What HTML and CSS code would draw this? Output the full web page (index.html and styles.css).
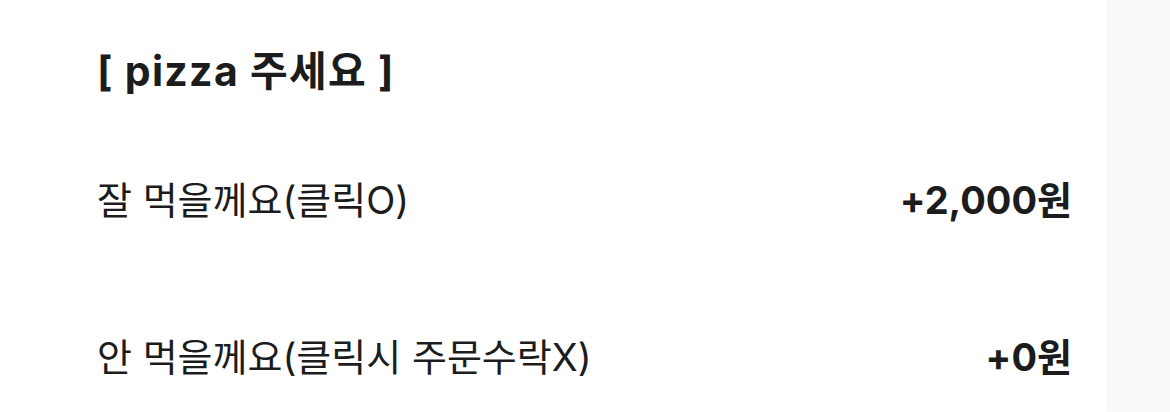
FILE: index.html
```html
<!DOCTYPE html>
<html lang="ko">
  <head>
    <meta charset="UTF-8" />
    <meta name="viewport" content="width=device-width, initial-scale=1.0" />
    <title>pizza 주세요</title>
    <link rel="stylesheet" href="styles.css">
  </head>

  <body>
    <div class="sheet">
      <h2 class="title">[ pizza 주세요 ]</h2>

      <div class="option">
        <span class="label">잘 먹을께요(클릭O)</span>
        <span class="price">+2,000원</span>
      </div>

      <div class="option">
        <span class="label">안 먹을께요(클릭시 주문수락X)</span>
        <span class="price">+0원</span>
      </div>
    </div>
  </body>
</html>
```

FILE: styles.css
```css
body {
  margin: 0;
  background-color: #fafafa;
  font-family: Inter, "Noto Sans CJK KR", sans-serif;
  color: #1c1c1c;
}

.sheet {
  width: 1107px;
  height: 412px;
  box-sizing: border-box;
  background-color: #ffffff;
  padding: 0 35px 0 97px;
  box-shadow: 1px 0 4px rgba(0, 0, 0, 0.04);
}

.title {
  margin: 0;
  padding-top: 47px;
  height: 48px;
  line-height: 48px;
  font-size: 41px;
  font-weight: 700;
  letter-spacing: 1.3px;
}

.option {
  display: flex;
  justify-content: space-between;
  align-items: center;
  height: 48px;
  font-size: 38px;
}

.option:nth-of-type(1) {
  margin-top: 78px;
}

.option + .option {
  margin-top: 109px;
}

.label {
  font-weight: 400;
}

.price {
  font-weight: 700;
}
```
